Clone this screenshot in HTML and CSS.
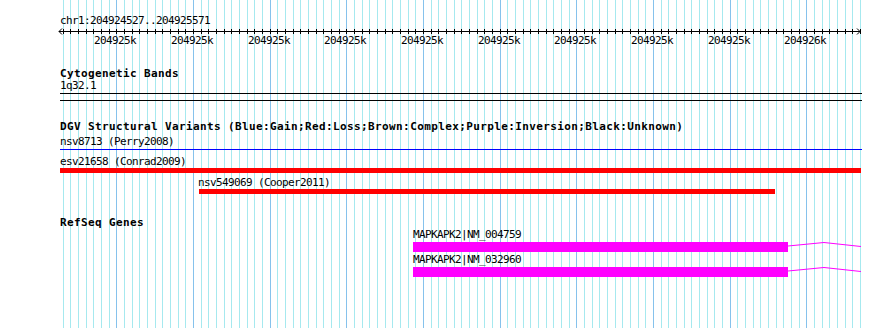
FILE: index.html
```html
<!DOCTYPE html>
<html lang="en">
<head>
    <meta charset="UTF-8">
    <title>chr1:204924527..204925571</title>
    <link rel="stylesheet" href="styles.css">
</head>
<body>
    <div class="browser">
        <!-- vertical grid, drawn by script.js -->
        <div class="grid" id="grid"></div>

        <div class="tracks">
            <!-- ruler -->
            <section class="ruler">
                <div class="ruler-title">chr1:204924527..204925571</div>
                <svg class="axis" id="axis" width="890" height="8" viewBox="0 0 890 8">
                    <line x1="59" y1="4.5" x2="861" y2="4.5" stroke="#000" stroke-width="1" shape-rendering="crispEdges"/>
                    <polyline points="62,1.5 59,4.5 62,7.5" fill="none" stroke="#000" stroke-width="1"/>
                    <polyline points="857,1.5 860,4.5 857,7.5" fill="none" stroke="#000" stroke-width="1"/>
                </svg>
                <div class="ruler-labels">
                    <span class="ruler-label" style="left:94px">204925k</span>
                    <span class="ruler-label" style="left:171px">204925k</span>
                    <span class="ruler-label" style="left:248px">204925k</span>
                    <span class="ruler-label" style="left:324px">204925k</span>
                    <span class="ruler-label" style="left:401px">204925k</span>
                    <span class="ruler-label" style="left:478px">204925k</span>
                    <span class="ruler-label" style="left:554px">204925k</span>
                    <span class="ruler-label" style="left:631px">204925k</span>
                    <span class="ruler-label" style="left:708px">204925k</span>
                    <span class="ruler-label" style="left:784px">204926k</span>
                </div>
            </section>

            <!-- cytogenetic bands -->
            <section class="track cyto">
                <h2 class="track-title">Cytogenetic Bands</h2>
                <div class="feature-label">1q32.1</div>
                <div class="rule rule-top"></div>
                <div class="rule rule-bottom"></div>
            </section>

            <!-- structural variants -->
            <section class="track dgv">
                <h2 class="track-title">DGV Structural Variants (Blue:Gain;Red:Loss;Brown:Complex;Purple:Inversion;Black:Unknown)</h2>
                <div class="feature-label first">nsv8713 (Perry2008)</div>
                <div class="gain-line"></div>
                <div class="feature-label esv">esv21658 (Conrad2009)</div>
                <div class="loss-bar" style="margin-left:0px;width:801px"></div>
                <div class="feature-label nsv" style="margin-left:138px">nsv549069 (Cooper2011)</div>
                <div class="loss-bar" style="margin-left:139px;width:576px"></div>
            </section>

            <!-- genes -->
            <section class="track genes">
                <h2 class="track-title">RefSeq Genes</h2>
                <div class="gene">
                    <div class="feature-label" style="margin-left:353px">MAPKAPK2|NM_004759</div>
                    <div class="gene-model" style="margin-left:353px">
                        <div class="exon" style="width:375px"></div>
                        <svg class="intron" width="74" height="10" viewBox="0 0 74 10">
                            <polyline points="0,4 36,0.5 73,4.5" fill="none" stroke="#ff00ff" stroke-width="1"/>
                        </svg>
                    </div>
                </div>
                <div class="gene">
                    <div class="feature-label" style="margin-left:353px">MAPKAPK2|NM_032960</div>
                    <div class="gene-model" style="margin-left:353px">
                        <div class="exon" style="width:375px"></div>
                        <svg class="intron" width="74" height="10" viewBox="0 0 74 10">
                            <polyline points="0,4 36,0.5 73,4.5" fill="none" stroke="#ff00ff" stroke-width="1"/>
                        </svg>
                    </div>
                </div>
            </section>
        </div>
    </div>

    <script src="script.js"></script>
</body>
</html>
```

FILE: styles.css
```css
/* page */
body {
    margin: 0;
    background: #fff;
}

.browser {
    position: relative;
    width: 890px;
    height: 328px;
    overflow: hidden;
    background: #fff;
    color: #000;
    font-family: "DejaVu Sans Mono", "Liberation Mono", monospace;
    font-size: 11px;
    line-height: 12px;
    letter-spacing: -0.62px;
}

/* grid */
.grid {
    position: absolute;
    top: 0;
    left: 0;
    right: 0;
    bottom: 0;
}

.grid-line {
    position: absolute;
    top: 0;
    bottom: 0;
    width: 1px;
    background: #a6e9ef;
}

.grid-line.major {
    background: #86c2ec;
}

.tracks {
    position: relative;
}

/* ruler */
.ruler-title {
    margin: 15px 0 0 60px;
    height: 12px;
    white-space: nowrap;
}

.axis {
    display: block;
}

.ruler-labels {
    position: relative;
    height: 12px;
}

.ruler-label {
    position: absolute;
    top: 0;
    white-space: nowrap;
}

/* tracks */
.track {
    padding-left: 60px;
}

.track-title {
    margin: 0;
    height: 12px;
    font-size: 11px;
    font-weight: bold;
    line-height: 12px;
    letter-spacing: 0.38px;
    white-space: nowrap;
}

.feature-label {
    position: relative;
    z-index: 1;
    height: 12px;
    white-space: nowrap;
}

.cyto {
    margin-top: 21px;
}

.rule {
    width: 802px;
    height: 1px;
    background: #000;
}

.rule-top {
    margin-top: 1px;
}

.rule-bottom {
    margin-top: 6px;
}

.dgv {
    margin-top: 20px;
}

.dgv .first {
    margin-top: 3px;
}

.gain-line {
    width: 802px;
    height: 1px;
    margin-top: 1px;
    background: #0000ff;
}

.dgv .esv {
    margin-top: 6px;
}

.dgv .nsv {
    margin-top: 4px;
}

.loss-bar {
    height: 5px;
    background: #ff0000;
}

.genes {
    margin-top: 23px;
}

.gene {
    margin-top: 1px;
}

.gene + .gene {
    margin-top: 3px;
}

.gene .feature-label {
    top: -1px;
}

.gene-model {
    display: flex;
    height: 10px;
}

.exon {
    height: 10px;
    background: #ff00ff;
}

.intron {
    display: block;
}
```

FILE: script.js
```js
// genome coordinates -> pixels
const START = 204924527;
const END = 204925571;

function toX(bp) {
    return Math.round(60.3 + (bp - START) * 0.7667);
}

const grid = document.getElementById('grid');
const axis = document.getElementById('axis');

for (let bp = START + 3; bp <= END; bp += 10) {
    const x = toX(bp);

    const line = document.createElement('div');
    line.className = bp % 100 === 0 ? 'grid-line major' : 'grid-line';
    line.style.left = x + 'px';
    grid.appendChild(line);

    const tick = document.createElementNS('http://www.w3.org/2000/svg', 'line');
    tick.setAttribute('x1', x + 0.5);
    tick.setAttribute('x2', x + 0.5);
    tick.setAttribute('y1', 2);
    tick.setAttribute('y2', 7);
    tick.setAttribute('stroke', '#000');
    tick.setAttribute('shape-rendering', 'crispEdges');
    axis.appendChild(tick);
}
```
